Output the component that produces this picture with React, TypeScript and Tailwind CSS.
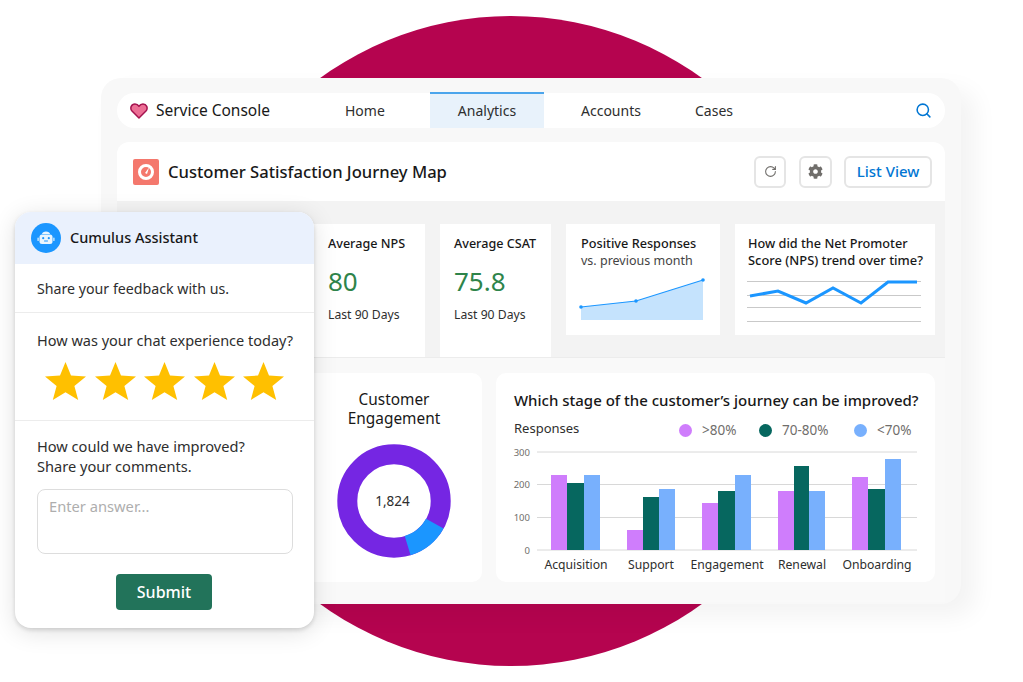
import { RotateCw, Search } from "lucide-react";
import { FaCog } from "react-icons/fa";

const font = { fontFamily: '"Noto Sans", "Open Sans", sans-serif' };

const bars = [
  { label: "Acquisition", cx: 576, x: [551, 567, 584, 600], tops: [475, 483, 475] },
  { label: "Support", cx: 651, x: [627, 643, 659, 675], tops: [530, 497, 489] },
  { label: "Engagement", cx: 727, x: [702, 718, 735, 751], tops: [503, 491, 475] },
  { label: "Renewal", cx: 802, x: [778, 794, 809, 825], tops: [491, 466, 491] },
  { label: "Onboarding", cx: 877, x: [852, 868, 885, 901], tops: [477, 489, 459] },
];
const barColors = ["#cf7dfc", "#06675f", "#78b0fd"];

const Heart = () => (
  <svg width="18" height="16" viewBox="0 0 18 16">
    <path d="M9 15 L2 8 C-0.5 5 1.5 1 5 1 C7 1 8.2 2 9 3.2 C9.8 2 11 1 13 1 C16.5 1 18.5 5 16 8 Z" fill="#ec6f95" stroke="#a5134f" strokeWidth="1.5" strokeLinejoin="round" />
  </svg>
);

const Gauge = () => (
  <div className="w-[26px] h-[26px] rounded-[2px] bg-[#f4786d] flex items-center justify-center">
    <svg width="18" height="18" viewBox="0 0 18 18">
      <circle cx="9" cy="9" r="6.5" fill="none" stroke="#fff" strokeWidth="3" />
      <path d="M8 10 L12 4.5 L10 11 Z" fill="#fff" />
    </svg>
  </div>
);

const Robot = () => (
  <div className="w-[30px] h-[30px] rounded-full bg-[#1b96ff] flex items-center justify-center">
    <svg width="20" height="20" viewBox="0 0 20 20">
      <path d="M6 6 C6 2.5 14 2.5 14 6 Z" fill="#eaf5fe" />
      <rect x="3.5" y="6.5" width="13" height="9.5" rx="2.5" fill="#eaf5fe" />
      <rect x="1.5" y="9.5" width="1.2" height="3.5" rx="0.6" fill="#eaf5fe" />
      <rect x="17.3" y="9.5" width="1.2" height="3.5" rx="0.6" fill="#eaf5fe" />
      <circle cx="7.2" cy="10.2" r="1.1" fill="#1b96ff" />
      <circle cx="12.8" cy="10.2" r="1.1" fill="#1b96ff" />
      <path d="M8.5 13 H11.5" stroke="#1b96ff" strokeWidth="1" strokeLinecap="round" />
    </svg>
  </div>
);

const Star = () => (
  <svg width="41" height="38" viewBox="0 0 41 38">
    <polygon points="20.5,0 26,13.6 41,14.6 29.4,24 33.2,38 20.5,30.2 7.8,38 11.6,24 0,14.6 15,13.6" fill="#ffc000" />
  </svg>
);

const StatCard = ({ title, value }: { title: string; value: string }) => (
  <div className="bg-white h-[111px] pt-[11px] flex flex-col">
    <div className="text-[12.6px] leading-[18px] font-medium text-[#181818] whitespace-nowrap">{title}</div>
    <div className="text-[26px] leading-[34px] mt-[11px] text-[#2e844a]">{value}</div>
    <div className="text-[12.2px] leading-[18px] mt-[8px] text-[#2e2e2e] whitespace-nowrap">Last 90 Days</div>
  </div>
);

export default function App() {
  return (
    <div className="relative w-[1023px] h-[682px] bg-white overflow-hidden pt-[78px] pl-[101px]" style={font}>
      {/* big circle behind the window */}
      <div className="absolute left-[186px] top-[16px] w-[650px] h-[650px] rounded-full bg-[#b5044f]" />

      <div className="relative w-[860px] h-[526px] rounded-[20px] bg-[#f8f8f8] shadow-[14px_12px_24px_rgba(0,0,0,0.05)] px-[16px] pt-[15px]">
        {/* nav */}
        <div className="h-[35px] rounded-full bg-white flex items-stretch pl-[13px] pr-[13px] text-[#2e2e2e]">
          <div className="flex items-center gap-[8px] w-[140px]">
            <Heart />
            <span className="text-[15.5px] text-[#181818] whitespace-nowrap">Service Console</span>
          </div>
          <div className="flex items-center ml-[75px] w-[85px] text-[14px]">Home</div>
          <div className="flex items-center justify-center w-[114px] -mt-[1px] pb-[1px] border-t-2 border-[#4ba5ec] bg-[#e8f2fb] text-[14px]">Analytics</div>
          <div className="flex items-center ml-[37px] w-[114px] text-[14px]">Accounts</div>
          <div className="flex items-center text-[14px]">Cases</div>
          <div className="flex items-center ml-auto">
            <Search size={17} strokeWidth={2.2} className="text-[#0176d3]" />
          </div>
        </div>

        {/* page header */}
        <div className="mt-[14px] h-[59px] bg-white rounded-t-[12px] flex items-center pl-[16px] pr-[13px]">
          <Gauge />
          <h1 className="ml-[9px] mt-[2px] text-[16.6px] font-medium text-[#181818] whitespace-nowrap">Customer Satisfaction Journey Map</h1>
          <div className="ml-auto flex items-center">
            <div className="w-[32px] h-[32px] rounded-[6px] border-2 border-[#e5e5e5] flex items-center justify-center">
              <RotateCw size={13} strokeWidth={2} className="text-[#706e6b]" />
            </div>
            <div className="ml-[13px] w-[33px] h-[32px] rounded-[6px] border-2 border-[#e5e5e5] flex items-center justify-center">
              <FaCog size={15} className="text-[#706e6b]" />
            </div>
            <div className="ml-[12px] w-[88px] h-[32px] rounded-[6px] border-2 border-[#e5e5e5] flex items-center justify-center text-[15px] font-medium text-[#0176d3] whitespace-nowrap">
              List View
            </div>
          </div>
        </div>

        {/* stats row */}
        <div className="h-[156px] bg-[#f3f3f3] pt-[23px] pl-[11px] flex gap-[15px]">
          <div className="w-[297px] bg-white pl-[200px]">
            <StatCard title="Average NPS" value="80" />
          </div>
          <div className="w-[111px] bg-white pl-[14px]">
            <StatCard title="Average CSAT" value="75.8" />
          </div>
          <div className="w-[154px] h-[111px] bg-white pl-[15px] pt-[11px]">
            <div className="text-[12.7px] leading-[17px] font-medium text-[#181818] whitespace-nowrap">Positive Responses</div>
            <div className="text-[12.5px] leading-[17px] text-[#444444] whitespace-nowrap">vs. previous month</div>
            <svg className="block mt-[5px] -ml-[15px]" width="154" height="50" viewBox="566 273 154 50">
              <polygon points="581,306 636,300 703,279 703,319 581,319" fill="#c5e3fd" />
              <polyline points="581,306 636,300 703,279" fill="none" stroke="#1b96ff" strokeWidth="1.2" />
              <circle cx="581" cy="306" r="1.8" fill="#1b96ff" />
              <circle cx="636" cy="300" r="1.8" fill="#1b96ff" />
              <circle cx="703" cy="279" r="1.8" fill="#1b96ff" />
            </svg>
          </div>
          <div className="w-[200px] h-[111px] bg-white pl-[13px] pt-[11px]">
            <div className="text-[12.7px] leading-[17px] font-medium text-[#181818] whitespace-nowrap">How did the Net Promoter</div>
            <div className="text-[12.9px] leading-[17px] font-medium text-[#181818] whitespace-nowrap">Score (NPS) trend over time?</div>
            <svg className="block mt-[5px] -ml-[13px]" width="200" height="50" viewBox="735 273 200 50">
              {[280.5, 294.5, 306.5, 320.5].map((y) => (
                <line key={y} x1="747" x2="921" y1={y} y2={y} stroke="#c9c9c9" strokeWidth="1" />
              ))}
              <polyline points="750,295 778,290 806,302 833,287 861,302 888,281 917,281" fill="none" stroke="#1b96ff" strokeWidth="3" />
            </svg>
          </div>
        </div>

        {/* lower row */}
        <div className="h-[245px] border-t border-[#ececec] bg-[#f9f9f9] pt-[15px] pl-[11px] flex gap-[14px]">
          <div className="w-[354px] h-[209px] bg-white rounded-[10px] flex justify-end">
            <div className="w-[176px] flex flex-col items-center pt-[17px]">
              <div className="text-[15.4px] leading-[19px] text-center text-[#181818]">Customer<br />Engagement</div>
              <div className="relative mt-[16px] w-[114px] h-[114px]">
                <svg width="114" height="114" viewBox="-57 -57 114 114">
                  <circle r="46.7" fill="none" stroke="#7526e3" strokeWidth="20" />
                  <path d="M40.8 22.6 A46.7 46.7 0 0 1 13.65 44.66" fill="none" stroke="#1b96ff" strokeWidth="20" />
                </svg>
                <div className="absolute inset-0 flex items-center justify-center pr-[3px] text-[13.5px] text-[#2e2e2e]">1,824</div>
              </div>
            </div>
          </div>

          <div className="w-[439px] h-[209px] bg-white rounded-[10px] pl-[18px] pt-[17px]">
            <div className="text-[15px] leading-[21px] font-medium text-[#181818] whitespace-nowrap">Which stage of the customer’s journey can be improved?</div>
            <div className="flex items-center mt-[9px] h-[18px] text-[13px]">
              <span className="text-[#2e2e2e] w-[165px]">Responses</span>
              <span className="w-[13px] h-[13px] rounded-full bg-[#cf7dfc] mt-[2px]" />
              <span className="ml-[10px] w-[57px] text-[#706e6b] text-[13.5px] mt-[2px]">&gt;80%</span>
              <span className="w-[13px] h-[13px] rounded-full bg-[#06675f] mt-[2px]" />
              <span className="ml-[10px] w-[72px] text-[#706e6b] text-[13.5px] mt-[2px]">70-80%</span>
              <span className="w-[13px] h-[13px] rounded-full bg-[#78b0fd] mt-[2px]" />
              <span className="ml-[10px] text-[#706e6b] text-[13.5px] mt-[2px]">&lt;70%</span>
            </div>
            <svg className="block -ml-[18px] mt-[7px]" width="439" height="135" viewBox="496 445 439 135">
              {[
                { y: 452, t: "300" },
                { y: 484.5, t: "200" },
                { y: 517.5, t: "100" },
                { y: 550, t: "0" },
              ].map((g) => (
                <g key={g.t}>
                  <line x1="537" x2="917" y1={g.y} y2={g.y} stroke="#d8d8d8" strokeWidth="1" />
                  <text x="530" y={g.y + 3.5} textAnchor="end" fontSize="9.5" fill="#706e6b">{g.t}</text>
                </g>
              ))}
              {bars.map((b) => (
                <g key={b.label}>
                  {b.tops.map((top, i) => (
                    <rect key={i} x={b.x[i]} y={top} width={b.x[i + 1] - b.x[i]} height={550 - top} fill={barColors[i]} />
                  ))}
                  <text x={b.cx} y="569" textAnchor="middle" fontSize="12.2" fill="#2e2e2e">{b.label}</text>
                </g>
              ))}
            </svg>
          </div>
        </div>
      </div>

      {/* chat widget lies over the window */}
      <div className="absolute left-[15px] top-[212px] w-[299px] h-[416px] rounded-[16px] bg-white overflow-hidden shadow-[0_2px_4px_rgba(0,0,0,0.14),0_4px_24px_rgba(0,0,0,0.12)] text-[#2e2e2e]">
        <div className="h-[52px] bg-[#eaf1fd] flex items-center pl-[16px] gap-[9px]">
          <Robot />
          <span className="text-[14.5px] font-medium text-[#181818] whitespace-nowrap">Cumulus Assistant</span>
        </div>
        <div className="h-[49px] border-b border-[#ececec] flex items-center pl-[22px] pt-[2px] text-[14.2px] whitespace-nowrap">Share your feedback with us.</div>
        <div className="h-[108px] border-b border-[#ececec] pt-[17px]">
          <div className="pl-[22px] text-[14.5px] leading-[20px] whitespace-nowrap">How was your chat experience today?</div>
          <div className="flex gap-[8.6px] pl-[30px] mt-[12px]">
            <Star />
            <Star />
            <Star />
            <Star />
            <Star />
          </div>
        </div>
        <div className="pl-[22px] pr-[21px] pt-[15px]">
          <div className="text-[14.6px] leading-[20px] whitespace-nowrap">How could we have improved?<br />Share your comments.</div>
          <div className="mt-[13px] h-[65px] rounded-[8px] border border-[#dddddd] px-[11px] pt-[6px] text-[14.7px] leading-[20px] text-[#aeaeae]">Enter answer...</div>
          <div className="mt-[20px] ml-[79px] w-[96px] h-[36px] rounded-[4px] bg-[#22735a] text-white flex items-center justify-center text-[16px] font-medium">Submit</div>
        </div>
      </div>
    </div>
  );
}
